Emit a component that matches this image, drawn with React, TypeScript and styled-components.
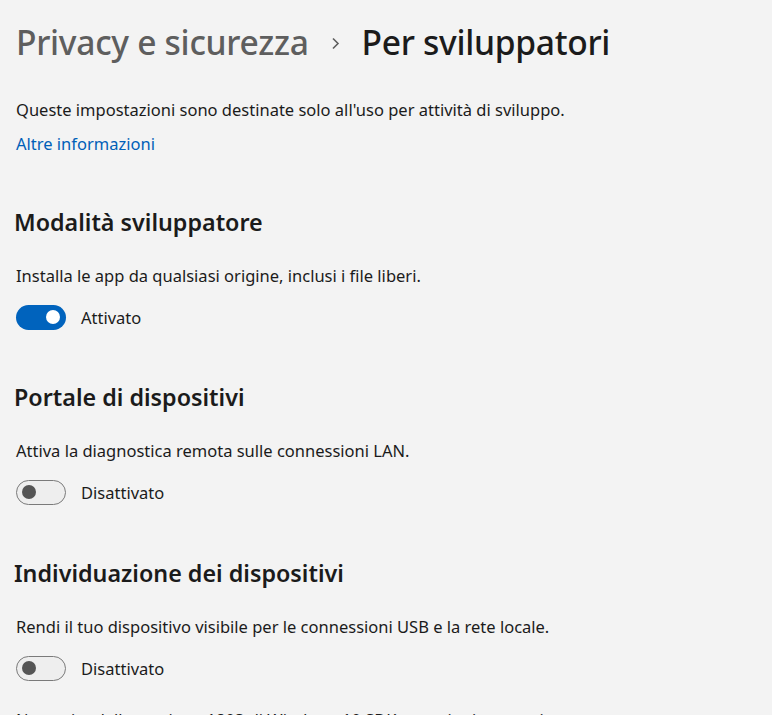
import React from "react";
import styled, { createGlobalStyle } from "styled-components";

const GlobalStyle = createGlobalStyle`
  html, body {
    margin: 0;
    padding: 0;
    background: #f3f3f3;
    overflow: hidden;
  }
  body {
    font-family: "Noto Sans", "Open Sans", sans-serif;
    color: #1b1b1b;
  }
`;

const Page = styled.main`
  display: flex;
  flex-direction: column;
  padding: 16px 16px 0 16px;
  height: 715px;
  box-sizing: border-box;
`;

const Breadcrumb = styled.h1`
  display: flex;
  align-items: center;
  gap: 22px;
  margin: 0;
  font-size: 33.6px;
  line-height: 52px;
  font-weight: 500;
  letter-spacing: -0.3px;
`;

const Crumb = styled.span<{ $current?: boolean }>`
  color: ${(p) => (p.$current ? "#1b1b1b" : "#5e5e5e")};
`;

const Chevron = styled.svg`
  width: 9px;
  height: 13px;
  margin-top: 2px;
  flex-shrink: 0;
`;

const Text = styled.p<{ $top?: number }>`
  margin: ${(p) => p.$top ?? 0}px 0 0 0;
  font-size: 16.5px;
  line-height: 24px;
  white-space: nowrap;
`;

const Link = styled.a`
  margin-top: 10px;
  font-size: 16.5px;
  line-height: 24px;
  color: #0060b8;
  text-decoration: none;
  align-self: flex-start;
`;

const Section = styled.section<{ $top: number }>`
  display: flex;
  flex-direction: column;
  margin-top: ${(p) => p.$top}px;
`;

const Heading = styled.h2`
  margin: 0 0 0 -2px;
  font-size: 23.3px;
  line-height: 34px;
  font-weight: 600;
`;

const ToggleRow = styled.div`
  display: flex;
  align-items: center;
  gap: 15px;
  margin-top: 16px;
  height: 26px;
  font-size: 16.5px;
`;

const Track = styled.span<{ $on: boolean }>`
  position: relative;
  width: 50px;
  height: 25px;
  box-sizing: border-box;
  border-radius: 13px;
  background: ${(p) => (p.$on ? "#0063bd" : "#eeeeee")};
  border: ${(p) => (p.$on ? "none" : "1px solid #7a7a7a")};
  flex-shrink: 0;
`;

const Thumb = styled.span<{ $on: boolean }>`
  position: absolute;
  top: 50%;
  width: 14px;
  height: 14px;
  border-radius: 50%;
  transform: translateY(-50%);
  background: ${(p) => (p.$on ? "#ffffff" : "#555555")};
  ${(p) => (p.$on ? "right: 6px;" : "left: 5px;")}
`;

const Toggle: React.FC<{ on: boolean; label: string }> = ({ on, label }) => (
  <ToggleRow>
    <Track $on={on}>
      <Thumb $on={on} />
    </Track>
    <span>{label}</span>
  </ToggleRow>
);

const sections = [
  {
    title: "Modalità sviluppatore",
    desc: "Installa le app da qualsiasi origine, inclusi i file liberi.",
    on: true,
    top: 49,
  },
  {
    title: "Portale di dispositivi",
    desc: "Attiva la diagnostica remota sulle connessioni LAN.",
    on: false,
    top: 50,
  },
  {
    title: "Individuazione dei dispositivi",
    desc: "Rendi il tuo dispositivo visibile per le connessioni USB e la rete locale.",
    on: false,
    top: 51,
  },
];

export default function App() {
  return (
    <>
      <GlobalStyle />
      <Page>
        <Breadcrumb>
          <Crumb>Privacy e sicurezza</Crumb>
          <Chevron viewBox="0 0 9 13">
            <path d="M2 1.5 L7 6.5 L2 11.5" fill="none" stroke="#5e5e5e" strokeWidth="1.6" />
          </Chevron>
          <Crumb $current>Per sviluppatori</Crumb>
        </Breadcrumb>
        <Text $top={30}>
          Queste impostazioni sono destinate solo all'uso per attività di sviluppo.
        </Text>
        <Link href="#">Altre informazioni</Link>
        {sections.map((s) => (
          <Section key={s.title} $top={s.top}>
            <Heading>{s.title}</Heading>
            <Text $top={25}>{s.desc}</Text>
            <Toggle on={s.on} label={s.on ? "Attivato" : "Disattivato"} />
          </Section>
        ))}
        <Text $top={27}>
          Necessita della versione 1803 di Windows 10 SDK o versioni successive.
        </Text>
      </Page>
    </>
  );
}
